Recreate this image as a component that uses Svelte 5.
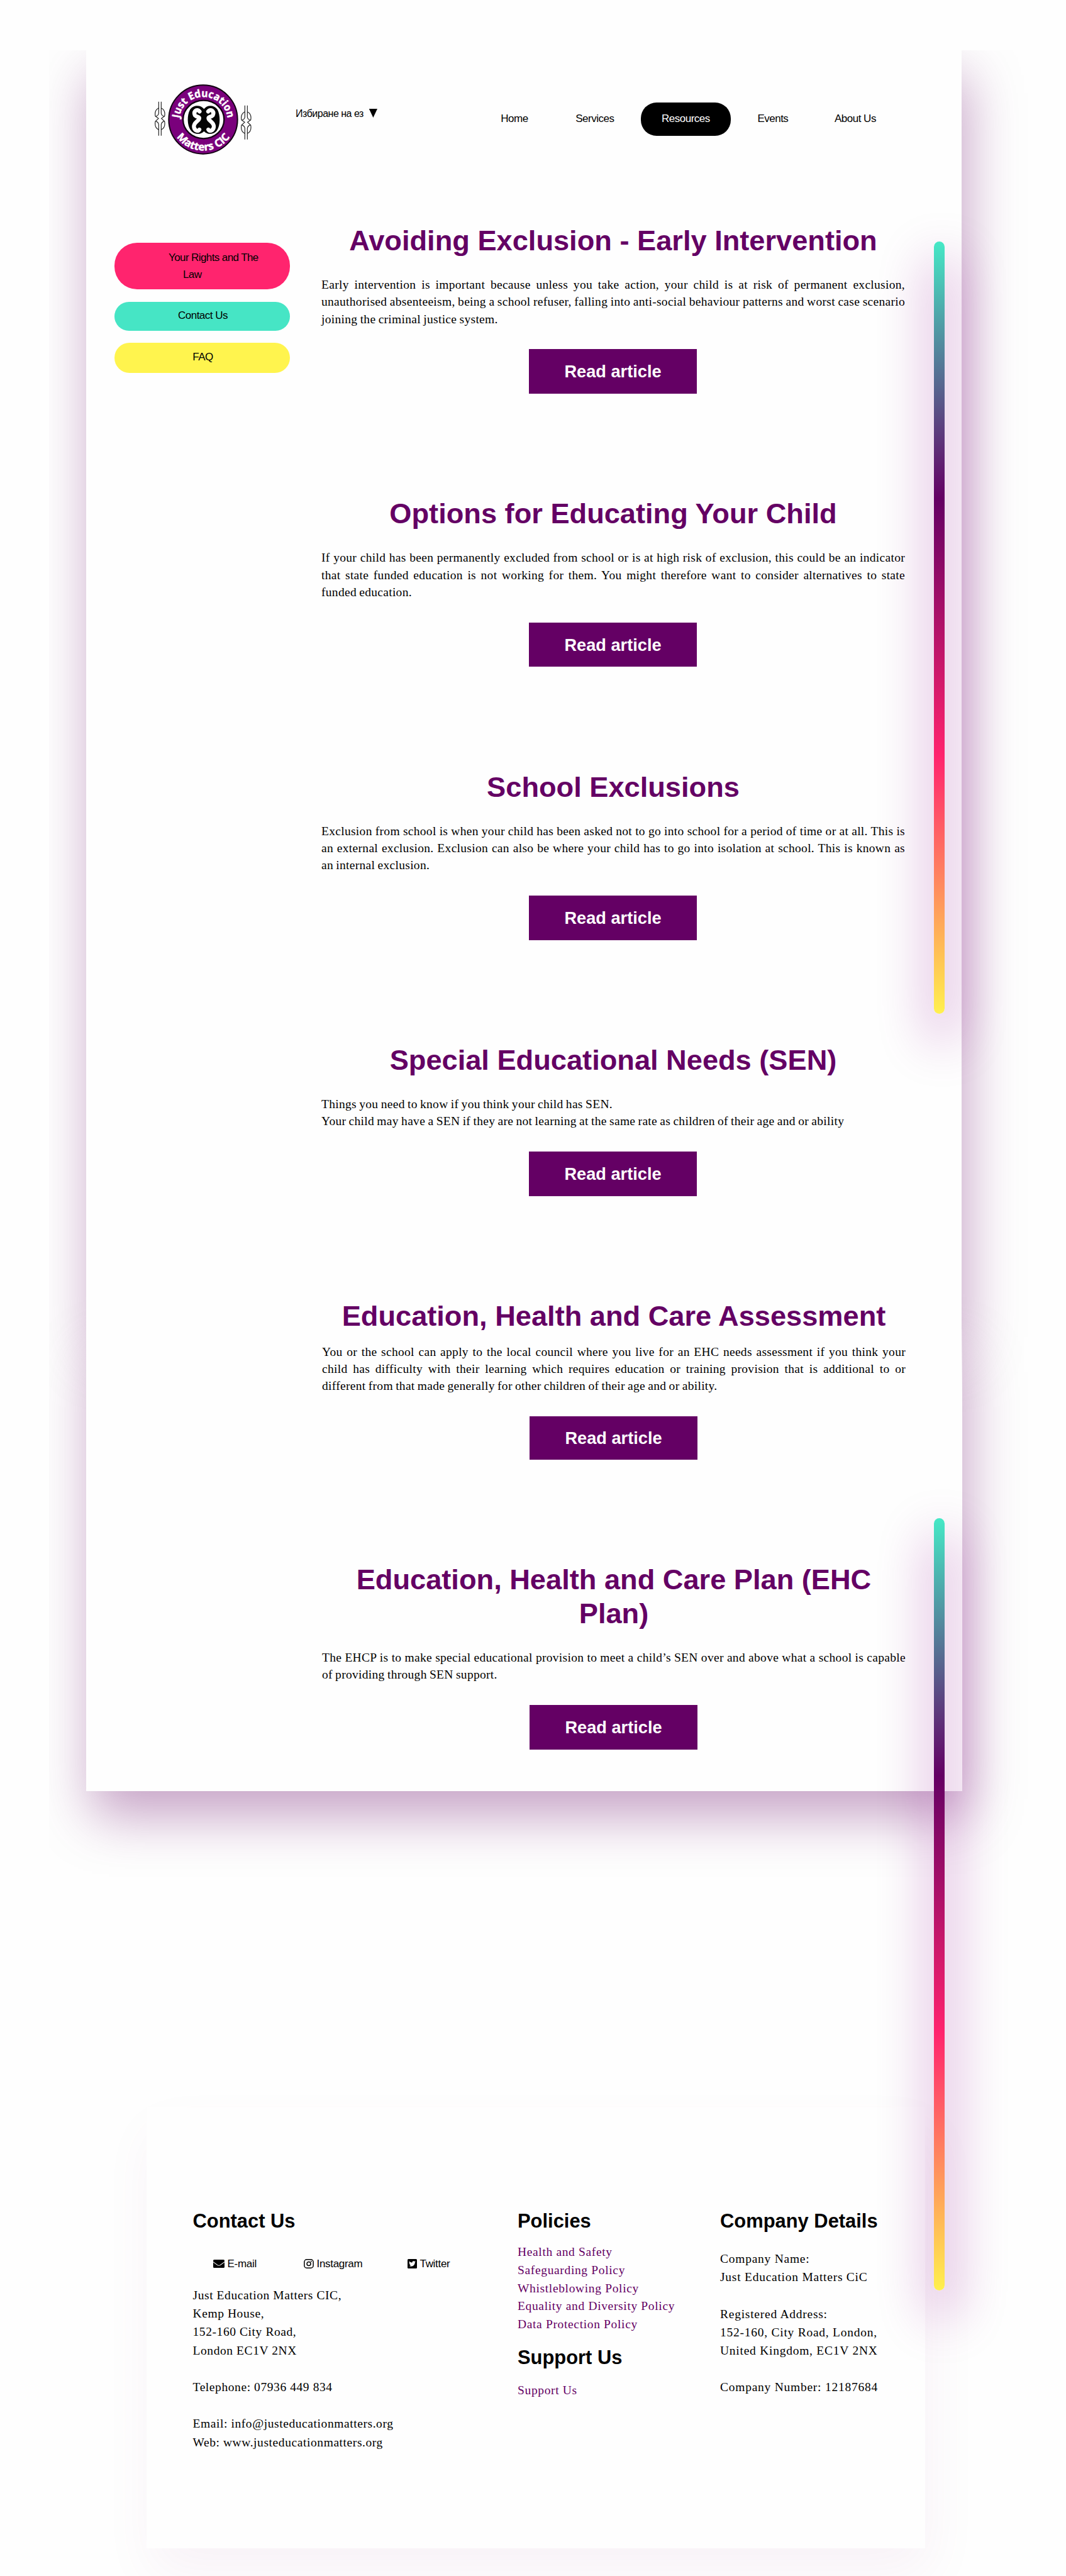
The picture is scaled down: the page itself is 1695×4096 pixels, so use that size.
<script>
  const nav = ['Home', 'Services', 'Resources', 'Events', 'About Us'];
  // Each paragraph is a list of set lines; every line but the last is justified.
  const articles = [
    {
      title: 'Avoiding Exclusion - Early Intervention',
      text: [['Early intervention is important because unless you take action, your child is at risk of permanent exclusion,', 'unauthorised absenteeism, being a school refuser, falling into anti-social behaviour patterns and worst case scenario', 'joining the criminal justice system.']]
    },
    {
      title: 'Options for Educating Your Child',
      text: [['If your child has been permanently excluded from school or is at high risk of exclusion, this could be an indicator', 'that state funded education is not working for them. You might therefore want to consider alternatives to state', 'funded education.']]
    },
    {
      title: 'School Exclusions',
      text: [['Exclusion from school is when your child has been asked not to go into school for a period of time or at all. This is', 'an external exclusion. Exclusion can also be where your child has to go into isolation at school. This is known as', 'an internal exclusion.']]
    },
    {
      title: 'Special Educational Needs (SEN)',
      text: [['Things you need to know if you think your child has SEN.'], ['Your child may have a SEN if they are not learning at the same rate as children of their age and or ability']]
    },
    {
      title: 'Education, Health and Care Assessment',
      tight: true,
      text: [['You or the school can apply to the local council where you live for an EHC needs assessment if you think your', 'child has difficulty with their learning which requires education or training provision that is additional to or', 'different from that made generally for other children of their age and or ability.']]
    },
    {
      title: 'Education, Health and Care Plan (EHC Plan)',
      shifted: true,
      text: [['The EHCP is to make special educational provision to meet a child’s SEN over and above what a school is capable', 'of providing through SEN support.']]
    }
  ];
  const policies = ['Health and Safety', 'Safeguarding Policy', 'Whistleblowing Policy', 'Equality and Diversity Policy', 'Data Protection Policy'];
</script>

<div class="site">
  <div class="sheets">
    <div class="sheet first"></div>
    <div class="sheet second"></div>
    <div class="cover"></div>
  </div>

  <div class="page">
    <header>
      <svg class="logo" viewBox="45 40 468 335" width="156" height="111.7">
        <defs>
          <path id="arc-top" d="M166 227 A115 112 0 1 1 394 227" />
          <path id="arc-bottom" d="M132 240 A150 139 0 0 0 428 240" />
        </defs>
        <circle cx="279" cy="208" r="164" fill="#7a007c" stroke="#120012" stroke-width="6" />
        <ellipse cx="281" cy="208" rx="98" ry="91" fill="#fff" stroke="#120012" stroke-width="7" />
        <path fill="#050505" d="M283 158 C268 136 232 138 217 160 C201 188 203 236 219 258 C234 281 268 282 283 264 C298 282 332 281 346 258 C361 236 362 188 347 160 C332 138 298 136 283 158Z" />
        <g fill="none" stroke="#fff" stroke-width="19" stroke-linecap="round" stroke-linejoin="round">
          <path d="M262 170 C250 155 232 168 239 186 C244 198 270 192 257 210 C246 222 234 226 235 243 C237 262 255 266 261 256" />
          <path d="M303 170 C315 155 333 168 326 186 C321 198 295 192 308 210 C319 222 331 226 330 243 C328 262 310 266 304 256" />
        </g>
        <g class="ring-text" fill="#fff" stroke="#fff" stroke-width="1.5">
          <text><textPath href="#arc-top" startOffset="50%" text-anchor="middle" textLength="336" lengthAdjust="spacingAndGlyphs">Just Education</textPath></text>
          <text><textPath href="#arc-bottom" startOffset="50%" text-anchor="middle" textLength="296" lengthAdjust="spacingAndGlyphs">Matters CIC</textPath></text>
        </g>
        {#each [[0, 0], [411, 18]] as [dx, dy]}
          <g transform="translate({dx} {dy})" fill="none" stroke="#222" stroke-width="3.5">
            <path d="M67 123 V178 M79 123 V178 M67 285 V232 M79 285 V232" />
            <path d="M67 153 C52 160 48 176 51 192 L66 203 L51 217 C48 234 52 250 67 257 M79 153 C94 160 98 176 95 192 L80 203 L95 217 C98 234 94 250 79 257" />
            <path d="M67 178 C66 188 58 192 52 194 M79 178 C80 188 88 192 94 194 M67 232 C66 222 58 218 52 216 M79 232 C80 222 88 218 94 216" />
          </g>
        {/each}
      </svg>
      <div class="language"><span>Избиране на ез</span><i></i></div>
      <nav>
        {#each nav as item}
          <a class:active={item === 'Resources'} href="#{item}">{item}</a>
        {/each}
      </nav>
    </header>

    <div class="columns">
      <aside>
        <a class="pill pink" href="#rights"><span class="indent">Your Rights and The</span><span class="law">Law</span></a>
        <a class="pill teal" href="#contact">Contact Us</a>
        <a class="pill yellow" href="#faq">FAQ</a>
      </aside>
      <main>
        {#each articles as a}
          <article class:tight={a.tight} class:shifted={a.shifted}>
            <h1>{a.title}</h1>
            {#each a.text as lines}
              <p>{#each lines as line}<span>{line}</span>{/each}</p>
            {/each}
            <a class="read" href="#read">Read article</a>
          </article>
        {/each}
      </main>
    </div>
  </div>

  <footer>
    <section class="contact">
      <h3>Contact Us</h3>
      <div class="social">
        <a href="#mail"><svg width="18" height="13" viewBox="0 0 18 13"><rect width="18" height="13" rx="1.6" /><path d="M0 3.6 L6.8 8.6 Q9 10 11.2 8.6 L18 3.6" fill="none" stroke="#fefefe" stroke-width="1.1" /></svg>E-mail</a>
        <a href="#instagram"><svg width="16" height="15" viewBox="0 0 16 15"><g fill="none" stroke="#000" stroke-width="1.5"><rect x=".9" y=".8" width="14.2" height="13.4" rx="3.8" /><circle cx="8" cy="7.5" r="3" /></g><circle cx="11.9" cy="3.7" r=".9" /></svg>Instagram</a>
        <a href="#twitter"><svg width="15" height="15" viewBox="0 0 448 448"><path d="M400 0H48C21.500 0 0 21.500 0 48v352c0 26.500 21.500 48 48 48h352c26.500 0 48-21.500 48-48V48c0-26.500-21.500-48-48-48zm-48.900 158.800c.2 2.800.2 5.700.2 8.500 0 86.700-66 186.600-186.600 186.600-37.200 0-71.700-10.800-100.700-29.400 5.300.6 10.400.8 15.800.8 30.700 0 58.900-10.400 81.400-28-28.800-.6-53-19.500-61.300-45.500 10.100 1.500 19.200 1.500 29.600-1.200-30-6.100-52.500-32.500-52.500-64.400v-.8c8.700 4.900 18.900 7.900 29.600 8.300a65.447 65.447 0 0 1-29.200-54.600c0-12.200 3.200-23.400 8.900-33.100 32.300 39.800 80.800 65.800 135.200 68.600-9.300-44.500 24-80.600 64-80.600 18.900 0 35.900 7.900 47.900 20.700 14.800-2.800 29-8.300 41.600-15.800-4.900 15.200-15.200 28-28.800 36.100 13.200-1.400 26-5.100 37.800-10.200-8.900 13.100-20.100 24.700-32.900 34z" /></svg>Twitter</a>
      </div>
      <div class="lines">Just Education Matters CIC,<br />Kemp House,<br />152-160 City Road,<br />London EC1V 2NX<br /><br />Telephone: 07936 449 834<br /><br />Email: info@justeducationmatters.org<br />Web: www.justeducationmatters.org</div>
    </section>
    <section class="policies">
      <h3>Policies</h3>
      <ul>{#each policies as p}<li><a href="#policy">{p}</a></li>{/each}</ul>
      <h3 class="support">Support Us</h3>
      <a href="#support">Support Us</a>
    </section>
    <section class="company">
      <h3>Company Details</h3>
      <div class="lines">Company Name:<br />Just Education Matters CiC<br /><br />Registered Address:<br />152-160, City Road, London,<br />United Kingdom, EC1V 2NX<br /><br />Company Number: 12187684</div>
    </section>
  </footer>

  <div class="bar upper"></div>
  <div class="bar lower"></div>
</div>

<style>
  :global(body) { background: #fefefe; }
  .site { position: relative; box-sizing: border-box; height: 4096px; overflow: hidden; padding-top: 80px; background: #fefefe; color: #000; font-family: "Liberation Serif", serif; }
  a { color: inherit; text-decoration: none; }
  h1, h3, p, ul { margin: 0; padding: 0; }

  /* Paper panels lying under the page content */
  .sheets { position: absolute; top: 80px; left: 78px; right: 0; height: 3000px; overflow: hidden; }
  .sheet { margin-left: 59px; width: 1392px; box-shadow: 8px 40px 80px rgba(100, 0, 100, .36); }
  .sheet.first { height: 2034px; }
  .sheet.second { height: 734px; margin-left: 60px; }
  .cover { position: absolute; left: 59px; top: 0; width: 1392px; height: 2768px; background: #fefefe; }

  .page { position: relative; height: 2768px; margin-left: 137px; width: 1392px; }
  header { display: flex; align-items: flex-start; height: 276px; font-family: "Liberation Sans", sans-serif; }
  .logo { margin: 54px 0 0 108px; flex: none; }
  .ring-text { font: 700 50px "Open Sans", sans-serif; }
  .language { display: flex; align-items: center; gap: 9px; width: 130px; margin: 91px 0 0 69px; font-size: 16px; line-height: 20px; letter-spacing: -.5px; white-space: nowrap; }
  .language i { width: 14px; height: 14px; margin-top: -2px; background: #000; clip-path: polygon(0 0, 100% 0, 50% 100%); }
  nav { display: flex; gap: 9px; margin: 83px 0 0 163px; }
  nav a { padding: 12px 33.3px 13px; border-radius: 25px; font-size: 17px; line-height: 27.5px; letter-spacing: -.5px; white-space: nowrap; }
  nav a:last-child { margin-left: -2px; }
  nav .active { background: #000; color: #fff; }

  .columns { display: flex; }
  aside { width: 279px; margin: 30px 50px 0 45px; font-family: "Liberation Sans", sans-serif; }
  .pill { display: block; box-sizing: border-box; text-align: center; font-size: 17px; line-height: 27.3px; letter-spacing: -.5px; }
  .pink { height: 73.5px; padding-top: 10px; border-radius: 36px; background: #ff246e; }
  .pink span { display: block; text-align: left; padding-left: 86px; letter-spacing: -.6px; }
  .pink .law { padding-left: 109px; }
  .teal { height: 46px; margin-top: 20.5px; padding: 7.5px 0 0 2px; border-radius: 23px; background: #46e5c5; }
  .yellow { height: 48px; margin-top: 19px; padding: 9px 0 0 2px; border-radius: 24px; background: #fff44e; }

  main { width: 928px; }
  article { margin-bottom: 164.5px; }
  article.tight, article.shifted { transform: translateX(1px); }
  h1 { margin-bottom: 29px; color: #640064; font: 700 45.2px/54px "Liberation Sans", sans-serif; text-align: center; }
  .tight h1 { margin-bottom: 15.5px; }
  p { font-size: 19.5px; line-height: 27.3px; letter-spacing: .3px; white-space: nowrap; }
  p span { display: block; text-align-last: justify; word-spacing: -3px; }
  p span:last-child { text-align-last: left; word-spacing: -.9px; }
  .read { display: block; width: 267px; height: 70.5px; margin: 34.5px 0 0 330px; box-sizing: border-box; background: #640064; color: #fff; font: 700 27.2px/72px "Liberation Sans", sans-serif; text-align: center; }
  .tight .read { height: 68.5px; line-height: 70px; }

  footer { display: flex; box-sizing: border-box; width: 1238px; height: 701px; margin: 503px 0 0 233px; padding: 163px 0 0 73.5px; position: relative; background: #fefefe; box-shadow: 8px 40px 80px rgba(140, 0, 120, .05); font-size: 19.5px; line-height: 29.2px; letter-spacing: .65px; white-space: nowrap; }
  h3 { font: 700 30.9px/36px "Liberation Sans", sans-serif; letter-spacing: 0; }
  .contact { width: 516.5px; letter-spacing: .58px; }
  .policies { width: 322px; color: #640064; line-height: 28.75px; }
  .policies h3 { color: #000; }
  .policies ul { list-style: none; margin-top: 17px; }
  .policies .support { margin: 20px 0 20px; }
  .social { display: flex; margin: 36px 0 0 32px; font: 17px/27px "Liberation Sans", sans-serif; letter-spacing: -.3px; }
  .social a { display: flex; align-items: center; gap: 5px; }
  .social a:nth-child(1) { width: 144px; }
  .social a:nth-child(2) { width: 165px; }
  .contact .lines { margin-top: 22px; }
  .company .lines { margin-top: 27px; letter-spacing: .75px; }

  .bar { position: absolute; left: 1485px; width: 17px; height: 1228px; border-radius: 10px; background: linear-gradient(#46e8c6, #640064 33.3%, #ff246e 66.6%, #fff04e); box-shadow: 5px 35px 80px 12px rgba(140, 0, 140, .32); }
  .upper { top: 384px; }
  .lower { top: 2414px; }
</style>
